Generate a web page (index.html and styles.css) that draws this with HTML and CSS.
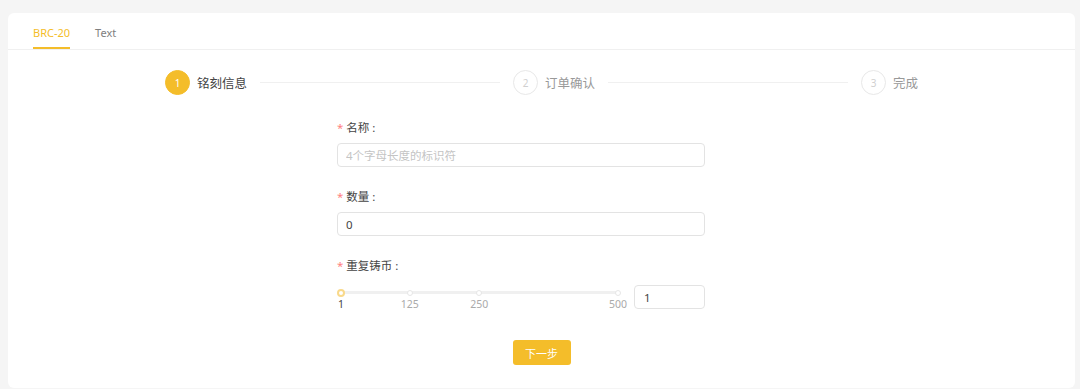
FILE: index.html
```html
<!DOCTYPE html>
<html lang="zh-CN">
<head>
  <meta charset="UTF-8">
  <meta name="viewport" content="width=device-width, initial-scale=1.0">
  <title>BRC-20 铭刻</title>
  <link rel="stylesheet" href="styles.css">
</head>
<body>
  <div class="card">
    <!-- Tabs -->
    <div class="tabs">
      <div class="tab active">BRC-20</div>
      <div class="tab">Text</div>
    </div>

    <!-- Steps -->
    <div class="steps">
      <div class="step current">
        <div class="step-icon">1</div>
        <div class="step-title">铭刻信息</div>
        <div class="step-line"></div>
      </div>
      <div class="step">
        <div class="step-icon">2</div>
        <div class="step-title">订单确认</div>
        <div class="step-line"></div>
      </div>
      <div class="step last">
        <div class="step-icon">3</div>
        <div class="step-title">完成</div>
      </div>
    </div>

    <!-- Form -->
    <form class="form">
      <div class="form-item">
        <label class="form-label"><span class="req">*</span>名称 :</label>
        <input type="text" class="text-input" placeholder="4个字母长度的标识符">
      </div>

      <div class="form-item">
        <label class="form-label"><span class="req">*</span>数量 :</label>
        <input type="text" class="text-input" value="0">
      </div>

      <div class="form-item">
        <label class="form-label"><span class="req">*</span>重复铸币 :</label>
        <div class="slider-row">
          <div class="slider">
            <div class="slider-rail">
              <span class="slider-dot" style="left: 0%"></span>
              <span class="slider-dot" style="left: 24.85%"></span>
              <span class="slider-dot" style="left: 49.9%"></span>
              <span class="slider-dot" style="left: 100%"></span>
              <span class="slider-handle" style="left: 0%"></span>
            </div>
            <div class="slider-marks">
              <span class="mark active" style="left: 0%">1</span>
              <span class="mark" style="left: 24.85%">125</span>
              <span class="mark" style="left: 49.9%">250</span>
              <span class="mark" style="left: 100%">500</span>
            </div>
          </div>
          <input type="text" class="number-input" value="1">
        </div>
      </div>

      <div class="form-actions">
        <button type="button" class="btn-primary">下一步</button>
      </div>
    </form>
  </div>
</body>
</html>
```

FILE: styles.css
```css
/* Reset and base styles */
* {
  margin: 0;
  padding: 0;
  box-sizing: border-box;
}

body {
  font-family: "Noto Sans", "Noto Sans CJK SC", sans-serif;
  color: #333;
  background-color: #f5f5f5;
  padding: 13px 5px 0 8px;
  height: 389px;
  overflow: hidden;
}

/* Card */
.card {
  background-color: white;
  border-radius: 6px;
  height: 375px;
}

/* Tabs */
.tabs {
  display: flex;
  gap: 25px;
  padding: 0 25px;
  height: 37px;
  border-bottom: 1px solid #f0f0f0;
}

.tab {
  font-size: 11px;
  color: #808080;
  display: flex;
  align-items: center;
  padding-top: 4px;
  border-bottom: 2px solid transparent;
}

.tab.active {
  color: #f4bd2a;
  border-bottom-color: #f4bd2a;
}

/* Steps */
.steps {
  width: 753px;
  margin: 20px auto 0;
  display: flex;
  align-items: center;
}

.step {
  flex: 1;
  display: flex;
  align-items: center;
}

.step.last {
  flex: none;
}

.step-icon {
  width: 25px;
  height: 25px;
  border-radius: 50%;
  border: 1px solid #e8e8e8;
  color: #d0d0d0;
  font-size: 10px;
  display: flex;
  align-items: center;
  justify-content: center;
}

.step.current .step-icon {
  background-color: #f4bd2a;
  border-color: #f4bd2a;
  color: white;
}

.step-title {
  margin-left: 7px;
  font-size: 12.5px;
  color: #999;
}

.step.current .step-title {
  color: #444;
}

.step-line {
  flex: 1;
  height: 1px;
  background-color: #f0f0f0;
  margin: 0 13px;
}

/* Form */
.form {
  width: 368px;
  margin: 23px 0 0 329px;
}

.form-item {
  margin-bottom: 20px;
}

.form-label {
  display: block;
  font-size: 11.5px;
  line-height: 20px;
  color: #444;
  margin-bottom: 5px;
}

.req {
  color: #ff8080;
  margin-right: 3px;
}

.text-input,
.number-input {
  display: block;
  width: 100%;
  height: 24px;
  border: 1px solid #e3e3e3;
  border-radius: 4px;
  padding: 0 8px;
  font-family: inherit;
  font-size: 11.5px;
  color: #444;
  outline: none;
}

.text-input::placeholder {
  color: #c4c4c4;
}

/* Slider */
.slider-row {
  display: flex;
  align-items: flex-start;
  padding-top: 4px;
}

.slider {
  flex: 1;
  padding: 6px 8px 0 4px;
}

.slider-rail {
  position: relative;
  height: 3px;
  background-color: #f0f0f0;
  border-radius: 2px;
}

.slider-dot,
.slider-handle {
  position: absolute;
  top: 50%;
  transform: translate(-50%, -50%);
  border-radius: 50%;
  background-color: white;
}

.slider-dot {
  width: 6px;
  height: 6px;
  border: 1px solid #e6e6e6;
}

.slider-handle {
  width: 8px;
  height: 8px;
  border: 2px solid #f9d98a;
}

.slider-marks {
  position: relative;
  height: 14px;
  margin-top: 3px;
}

.mark {
  position: absolute;
  top: 0;
  transform: translateX(-50%);
  font-size: 10.5px;
  line-height: 14px;
  color: #aaa;
}

.mark.active {
  color: #444;
}

.number-input {
  width: 71px;
  flex: none;
  margin-left: 8px;
  padding: 0 9px;
}

/* Actions */
.form-actions {
  display: flex;
  justify-content: center;
  width: 1067px;
  margin-left: -329px;
  padding-top: 9px;
}

.btn-primary {
  width: 58px;
  height: 25px;
  border: none;
  border-radius: 3px;
  background-color: #f4bd2a;
  color: white;
  font-family: inherit;
  font-size: 11px;
  cursor: pointer;
}
```
